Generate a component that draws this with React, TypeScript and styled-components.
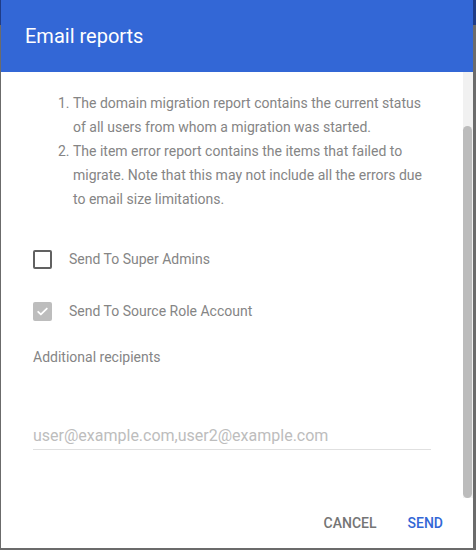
import * as React from 'react';
import styled, { createGlobalStyle } from 'styled-components';

const GlobalStyle = createGlobalStyle`
  html, body {
    margin: 0;
    padding: 0;
    height: 100%;
  }
  body {
    font-family: Roboto, "Noto Sans", Arial, sans-serif;
    background: #6b6b6b;
  }
`;

/**
 * The dimmed page behind the dialog.
 */
const Backdrop = styled.div`
  position: relative;
  width: 476px;
  height: 550px;
  overflow: hidden;
  background: #6b6b6b;
`;

const DimmedAppBar = styled.div`
  height: 25px;
  background: #1f3c86;
`;

const Dialog = styled.div`
  position: absolute;
  left: 1px;
  top: 0;
  width: 472px;
  height: 548px;
  background: #fff;
  display: flex;
  flex-direction: column;
`;

const Header = styled.div`
  height: 72px;
  flex: none;
  display: flex;
  align-items: center;
  padding: 0 24px;
  background: #3367d6;
  color: #fff;
  font-size: 20px;
  font-weight: 400;
`;

const Scroller = styled.div`
  flex: 1;
  min-height: 0;
  display: flex;
`;

// top padding leaves room above the notes, which are scrolled past here
const Body = styled.div`
  flex: 1;
  overflow-y: scroll;
  scrollbar-width: none;
  padding: 81px 32px 48px 32px;
  color: #858585;
  font-size: 14px;
  line-height: 24px;

  &::-webkit-scrollbar {
    display: none;
  }
`;

const Track = styled.div`
  width: 10px;
  flex: none;
  position: relative;
  background: #f1f1f1;
`;

const Thumb = styled.div`
  position: absolute;
  left: 0;
  right: 1px;
  border-radius: 5px;
  background: #bcbcbc;
`;

const Notes = styled.ol`
  margin: 0 0 22px;
  padding-left: 40px;
`;

const CheckRow = styled.label`
  height: 52px;
  display: flex;
  align-items: center;
  gap: 17px;
`;

const Box = styled.span<{ $checked?: boolean }>`
  width: 19px;
  height: 19px;
  box-sizing: border-box;
  border-radius: 2px;
  border: 2px solid ${p => (p.$checked ? '#bdbdbd' : '#616161')};
  background: ${p => (p.$checked ? '#bdbdbd' : 'transparent')};
  display: flex;
  align-items: center;
  justify-content: center;
`;

const SectionLabel = styled.div`
  margin-top: 8px;
`;

const Recipients = styled.input`
  display: block;
  width: 100%;
  box-sizing: border-box;
  margin-top: 48px;
  height: 33px;
  padding: 4px 0 0;
  border: none;
  border-bottom: 1px solid #e0e0e0;
  outline: none;
  font-family: Roboto, "Noto Sans", Arial, sans-serif;
  font-size: 16px;
  color: #212121;

  &::placeholder {
    color: #bdbdbd;
  }
`;

const Footer = styled.div`
  height: 50px;
  flex: none;
  display: flex;
  align-items: center;
  justify-content: flex-end;
  gap: 15px;
  padding: 0 22px;
`;

const Action = styled.button<{ $primary?: boolean }>`
  border: none;
  background: none;
  padding: 0 8px;
  height: 36px;
  font-family: Roboto, "Noto Sans", Arial, sans-serif;
  font-size: 14px;
  font-weight: 500;
  text-transform: uppercase;
  color: ${p => (p.$primary ? '#3367d6' : '#757575')};
`;

const Check = () => (
  <svg width="13" height="13" viewBox="0 0 24 24">
    <path
      d="M4 12.5l5 5L20 6.5"
      fill="none"
      stroke="#fff"
      strokeWidth="3.2"
      strokeLinecap="round"
      strokeLinejoin="round"
    />
  </svg>
);

export default function App() {
  const bodyRef = React.useRef<HTMLDivElement>(null);
  const [thumb, setThumb] = React.useState({ top: 0, height: 0 });

  // the dialog is shown scrolled down to the recipients field
  React.useLayoutEffect(() => {
    const el = bodyRef.current;
    if (!el) return;
    el.scrollTop = el.scrollHeight;
    const track = el.clientHeight;
    setThumb({
      top: (track * el.scrollTop) / el.scrollHeight,
      height: (track * el.clientHeight) / el.scrollHeight,
    });
  }, []);

  return (
    <>
      <GlobalStyle />
      <Backdrop>
        <DimmedAppBar />
        <Dialog>
          <Header>Email reports</Header>
          <Scroller>
            <Body ref={bodyRef}>
              <Notes>
                <li>
                  The domain migration report contains the current status of
                  all users from whom a migration was started.
                </li>
                <li>
                  The item error report contains the items that failed to
                  migrate. Note that this may not include all the errors due to
                  email size limitations.
                </li>
              </Notes>
              <CheckRow>
                <Box />
                Send To Super Admins
              </CheckRow>
              <CheckRow>
                <Box $checked>
                  <Check />
                </Box>
                Send To Source Role Account
              </CheckRow>
              <SectionLabel>Additional recipients</SectionLabel>
              <Recipients placeholder="user@example.com,user2@example.com" />
            </Body>
            <Track>
              <Thumb style={{ top: thumb.top, height: thumb.height }} />
            </Track>
          </Scroller>
          <Footer>
            <Action>Cancel</Action>
            <Action $primary>Send</Action>
          </Footer>
        </Dialog>
      </Backdrop>
    </>
  );
}
